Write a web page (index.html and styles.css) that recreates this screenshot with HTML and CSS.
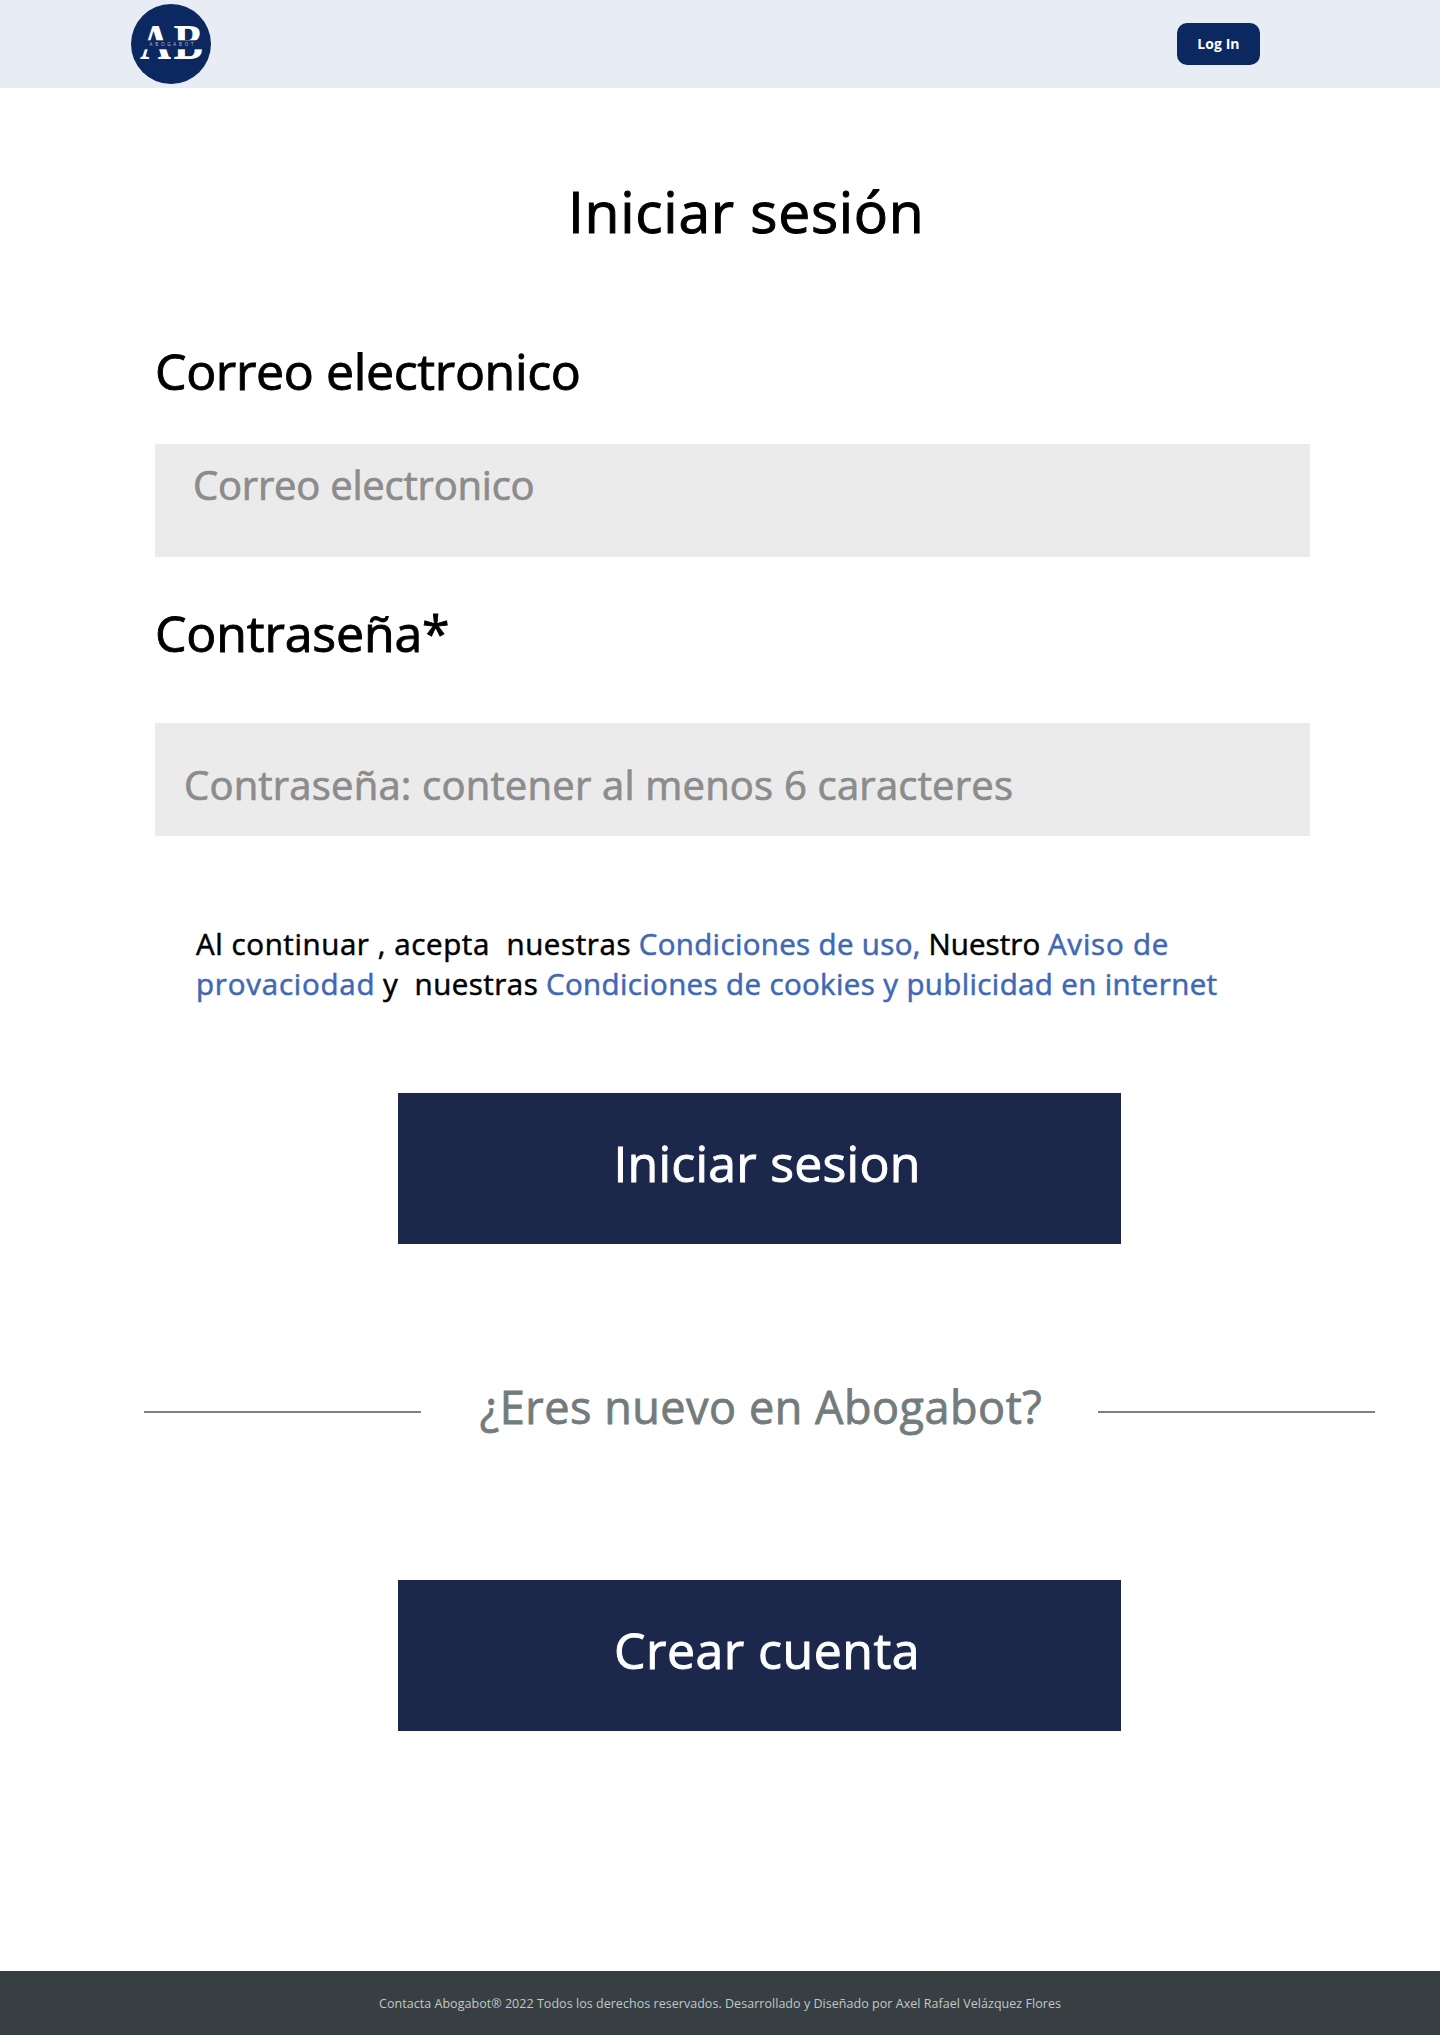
FILE: index.html
```html
<!DOCTYPE html>
<html lang="es">
<head>
<meta charset="utf-8">
<title>Abogabot - Iniciar sesión</title>
<link rel="stylesheet" href="styles.css">
</head>
<body>
<header class="topbar">
  <svg class="logo" viewBox="0 0 80 80" role="img" aria-label="Abogabot">
    <circle cx="40" cy="40" r="40" fill="#0c2861"/>
    <g class="logo-letter">
      <text x="9" y="54.5" textLength="31" lengthAdjust="spacingAndGlyphs">A</text>
      <text x="42.5" y="54.5" textLength="29.5" lengthAdjust="spacingAndGlyphs">B</text>
    </g>
    <rect x="6" y="36.3" width="68" height="9" fill="#0c2861"/>
    <text class="logo-name" x="18.5" y="42.3" textLength="44">ABOGABOT</text>
  </svg>
  <button class="login">Log In</button>
</header>
<main>
  <h1 class="title">Iniciar sesión</h1>
  <form class="form">
    <label class="label label-mail">Correo electronico</label>
    <div class="field field-mail">Correo electronico</div>
    <label class="label label-pass">Contraseña*</label>
    <div class="field field-pass">Contraseña: contener al menos 6 caracteres</div>
  </form>
  <p class="terms"><span class="t1">Al continuar , acepta&nbsp; nuestras</span> <a class="t2">Condiciones de uso,</a> <span class="t3">Nuestro</span> <a class="t4">Aviso de<br>provaciodad</a> <span class="t5">y&nbsp; nuestras</span> <a class="t6">Condiciones de cookies y publicidad en internet</a></p>
  <button class="action action-login">Iniciar sesion</button>
  <div class="divider"><span class="line"></span><span class="question">¿Eres nuevo en Abogabot?</span><span class="line"></span></div>
  <button class="action action-create">Crear cuenta</button>
</main>
<footer class="footer">Contacta Abogabot® 2022 Todos los derechos reservados. Desarrollado y Diseñado por Axel Rafael Velázquez Flores</footer>
</body>
</html>
```
FILE: styles.css
```css
* { box-sizing: border-box; }
body {
  margin: 0;
  background: #fff;
  color: #000;
  font-family: "Open Sans", sans-serif;
}
button { font-family: inherit; border: 0; }

.topbar {
  display: flex;
  justify-content: space-between;
  align-items: center;
  height: 88px;
  padding: 0 180px 0 131px;
  background: #e8ecf5;
}
.logo { width: 80px; height: 80px; }
.logo-letter { font: bold 50px "Liberation Serif", serif; fill: #fff; }
.logo-name { font: 4.5px "Open Sans", sans-serif; fill: #b9c3d8; }
.login {
  width: 83px;
  height: 42px;
  padding: 0 0 1px;
  border-radius: 10px;
  background: #0c2861;
  color: #fff;
  font-size: 14px;
  font-weight: 700;
  letter-spacing: 0.05px;
}

.title, .label, .field, .terms, .action, .question { -webkit-text-stroke: 0.018em; }
.title {
  margin: 83px 0 0 568px;
  font-size: 57px;
  font-weight: 400;
  line-height: 80px;
  letter-spacing: 0.7px;
}
.form { width: 1155px; margin: 85px 0 0 155px; }
.label { display: block; font-size: 50px; line-height: 70px; }
.label-mail { letter-spacing: -0.36px; }
.label-pass { margin-top: 41px; letter-spacing: -0.16px; }
.field {
  height: 113px;
  background: #ebebeb;
  color: #8c8c8c;
  font-size: 40px;
  line-height: 50px;
}
.field-mail { margin-top: 38px; padding: 16px 0 0 38px; letter-spacing: -0.23px; }
.field-pass { margin-top: 55px; padding: 37px 0 0 29px; letter-spacing: 0.19px; }

.terms {
  margin: 88px 0 0 196px;
  font-size: 29.5px;
  line-height: 40px;
  white-space: nowrap;
}
.terms a { color: #3f68b5; }
.t1 { letter-spacing: 0.6px; }
.t2 { letter-spacing: 0.345px; }
.t3 { letter-spacing: 0.084px; }
.t4 { letter-spacing: 0.78px; }
.t5 { letter-spacing: 0.48px; }
.t6 { letter-spacing: 0.37px; }

.action {
  display: block;
  width: 723px;
  height: 151px;
  margin-left: 398px;
  padding: 0 0 11px 15px;
  background: #1b274b;
  color: #fff;
  font-size: 50px;
  line-height: 70px;
}
.action-login { margin-top: 89px; letter-spacing: 0.22px; }
.action-create { margin-top: 143px; letter-spacing: 0.48px; }

.divider {
  display: flex;
  justify-content: space-between;
  align-items: flex-start;
  width: 1231px;
  height: 60px;
  margin: 133px 0 0 144px;
}
.line { width: 277px; height: 2px; margin-top: 34px; background: #808080; }
.question {
  padding-left: 3px;
  color: #737b7c;
  font-size: 45px;
  line-height: 60px;
  letter-spacing: 0.51px;
}

.footer {
  height: 64px;
  margin-top: 240px;
  padding-top: 23px;
  background: #383f42;
  color: #c0c8c8;
  font-size: 12.5px;
  line-height: 20px;
  letter-spacing: 0.038px;
  text-align: center;
}
```
